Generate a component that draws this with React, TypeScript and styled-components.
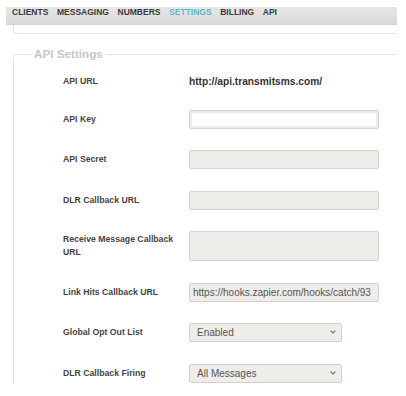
import React from 'react';
import styled, { createGlobalStyle } from 'styled-components';

const GlobalStyle = createGlobalStyle`
  html, body {
    margin: 0;
    padding: 0;
    background: #ffffff;
    font-family: "Liberation Sans", Arial, sans-serif;
    overflow: hidden;
  }
`;

const Page = styled.div`
  width: 406px;
  height: 396px;
  padding-top: 7px;
  box-sizing: border-box;
`;

const NavBar = styled.nav`
  margin: 0 9px 0 6px;
  height: 18px;
  background: linear-gradient(#e6e6e6, #d9d9d9);
  display: flex;
  gap: 8.6px;
  padding-left: 6px;
  border-bottom: 1px solid #d2d2d2;
  box-sizing: border-box;
`;

const NavItem = styled.a<{ $active?: boolean }>`
  font-size: 8.5px;
  font-weight: bold;
  line-height: 10px;
  color: ${({ $active }) => ($active ? '#5fb6c9' : '#3a3a3a')};
  text-decoration: none;
  text-transform: uppercase;
`;

const PrevPanel = styled.div`
  margin: 0 9px 0 13px;
  height: 8px;
  border: 1px solid #e4e4e4;
  border-top: none;
  border-right: none;
  border-radius: 0 0 0 4px;
`;

const Fieldset = styled.fieldset`
  margin: 13px 9px 0 13px;
  padding: 3.25px 0 0 49px;
  border: 1px solid #e4e4e4;
  border-bottom: none;
  border-right: none;
  border-radius: 5px 0 0 0;
  min-width: 0;
`;

const Legend = styled.legend`
  margin-left: -32px;
  padding: 0 3px;
  font-size: 11.7px;
  line-height: 14px;
  font-weight: bold;
  color: #c6c6c6;
`;

const Row = styled.div`
  display: grid;
  grid-template-columns: 126px 1fr;
  align-items: center;
  padding: 10.75px 0;

  &:last-child {
    padding-bottom: 1px;
  }
`;

const Label = styled.label`
  font-size: 8.7px;
  line-height: 13px;
  font-weight: bold;
  color: #444;
  padding-right: 10px;
`;

const Value = styled.span`
  font-size: 10.2px;
  line-height: 13px;
  font-weight: bold;
  color: #333;
`;

const TextInput = styled.input<{ $blank?: boolean }>`
  display: block;
  width: 190px;
  height: 19px;
  box-sizing: border-box;
  border: 1px solid #d0d0cc;
  border-radius: 2px;
  background: ${({ $blank }) => ($blank ? '#ffffff' : '#eeede9')};
  box-shadow: ${({ $blank }) => ($blank ? 'inset 0 0 0 2px #eeede9' : 'none')};
  padding: 0 3px;
  font-family: "Liberation Sans", Arial, sans-serif;
  font-size: 10px;
  color: #555;
  outline: none;
`;

const TextArea = styled.textarea`
  display: block;
  width: 190px;
  height: 30px;
  box-sizing: border-box;
  border: 1px solid #d0d0cc;
  border-radius: 2px;
  background: #eeede9;
  resize: none;
  outline: none;
`;

const SelectWrap = styled.div`
  position: relative;
  width: 153px;
  height: 19px;
`;

const Select = styled.select`
  display: block;
  appearance: none;
  width: 100%;
  height: 100%;
  box-sizing: border-box;
  border: 1px solid #d0d0cc;
  border-radius: 2px;
  background: #eeede9;
  padding: 0 0 0 7px;
  font-family: "Liberation Sans", Arial, sans-serif;
  font-size: 10px;
  color: #555;
  outline: none;
`;

const Chevron = styled.svg`
  position: absolute;
  right: 6px;
  top: 7px;
  pointer-events: none;
`;

const Caret = () => (
  <Chevron width="6" height="4" viewBox="0 0 6 4">
    <path d="M0.6 0.6 L3 3 L5.4 0.6" fill="none" stroke="#707070" strokeWidth="1.2" />
  </Chevron>
);

const navItems = ['Clients', 'Messaging', 'Numbers', 'Settings', 'Billing', 'API'];

export default function App() {
  return (
    <Page>
      <GlobalStyle />
      <NavBar>
        {navItems.map((item) => (
          <NavItem key={item} href="#" $active={item === 'Settings'}>
            {item}
          </NavItem>
        ))}
      </NavBar>
      <PrevPanel />
      <Fieldset>
        <Legend>API Settings</Legend>
        <Row>
          <Label>API URL</Label>
          <Value>http://api.transmitsms.com/</Value>
        </Row>
        <Row>
          <Label>API Key</Label>
          <TextInput $blank defaultValue="" />
        </Row>
        <Row>
          <Label>API Secret</Label>
          <TextInput defaultValue="" />
        </Row>
        <Row>
          <Label>DLR Callback URL</Label>
          <TextInput defaultValue="" />
        </Row>
        <Row>
          <Label>Receive Message Callback URL</Label>
          <TextArea defaultValue="" />
        </Row>
        <Row>
          <Label>Link Hits Callback URL</Label>
          <TextInput defaultValue="https://hooks.zapier.com/hooks/catch/93" />
        </Row>
        <Row>
          <Label>Global Opt Out List</Label>
          <SelectWrap>
            <Select defaultValue="enabled">
              <option value="enabled">Enabled</option>
              <option value="disabled">Disabled</option>
            </Select>
            <Caret />
          </SelectWrap>
        </Row>
        <Row>
          <Label>DLR Callback Firing</Label>
          <SelectWrap>
            <Select defaultValue="all">
              <option value="all">All Messages</option>
              <option value="failed">Failed Messages</option>
            </Select>
            <Caret />
          </SelectWrap>
        </Row>
      </Fieldset>
    </Page>
  );
}
